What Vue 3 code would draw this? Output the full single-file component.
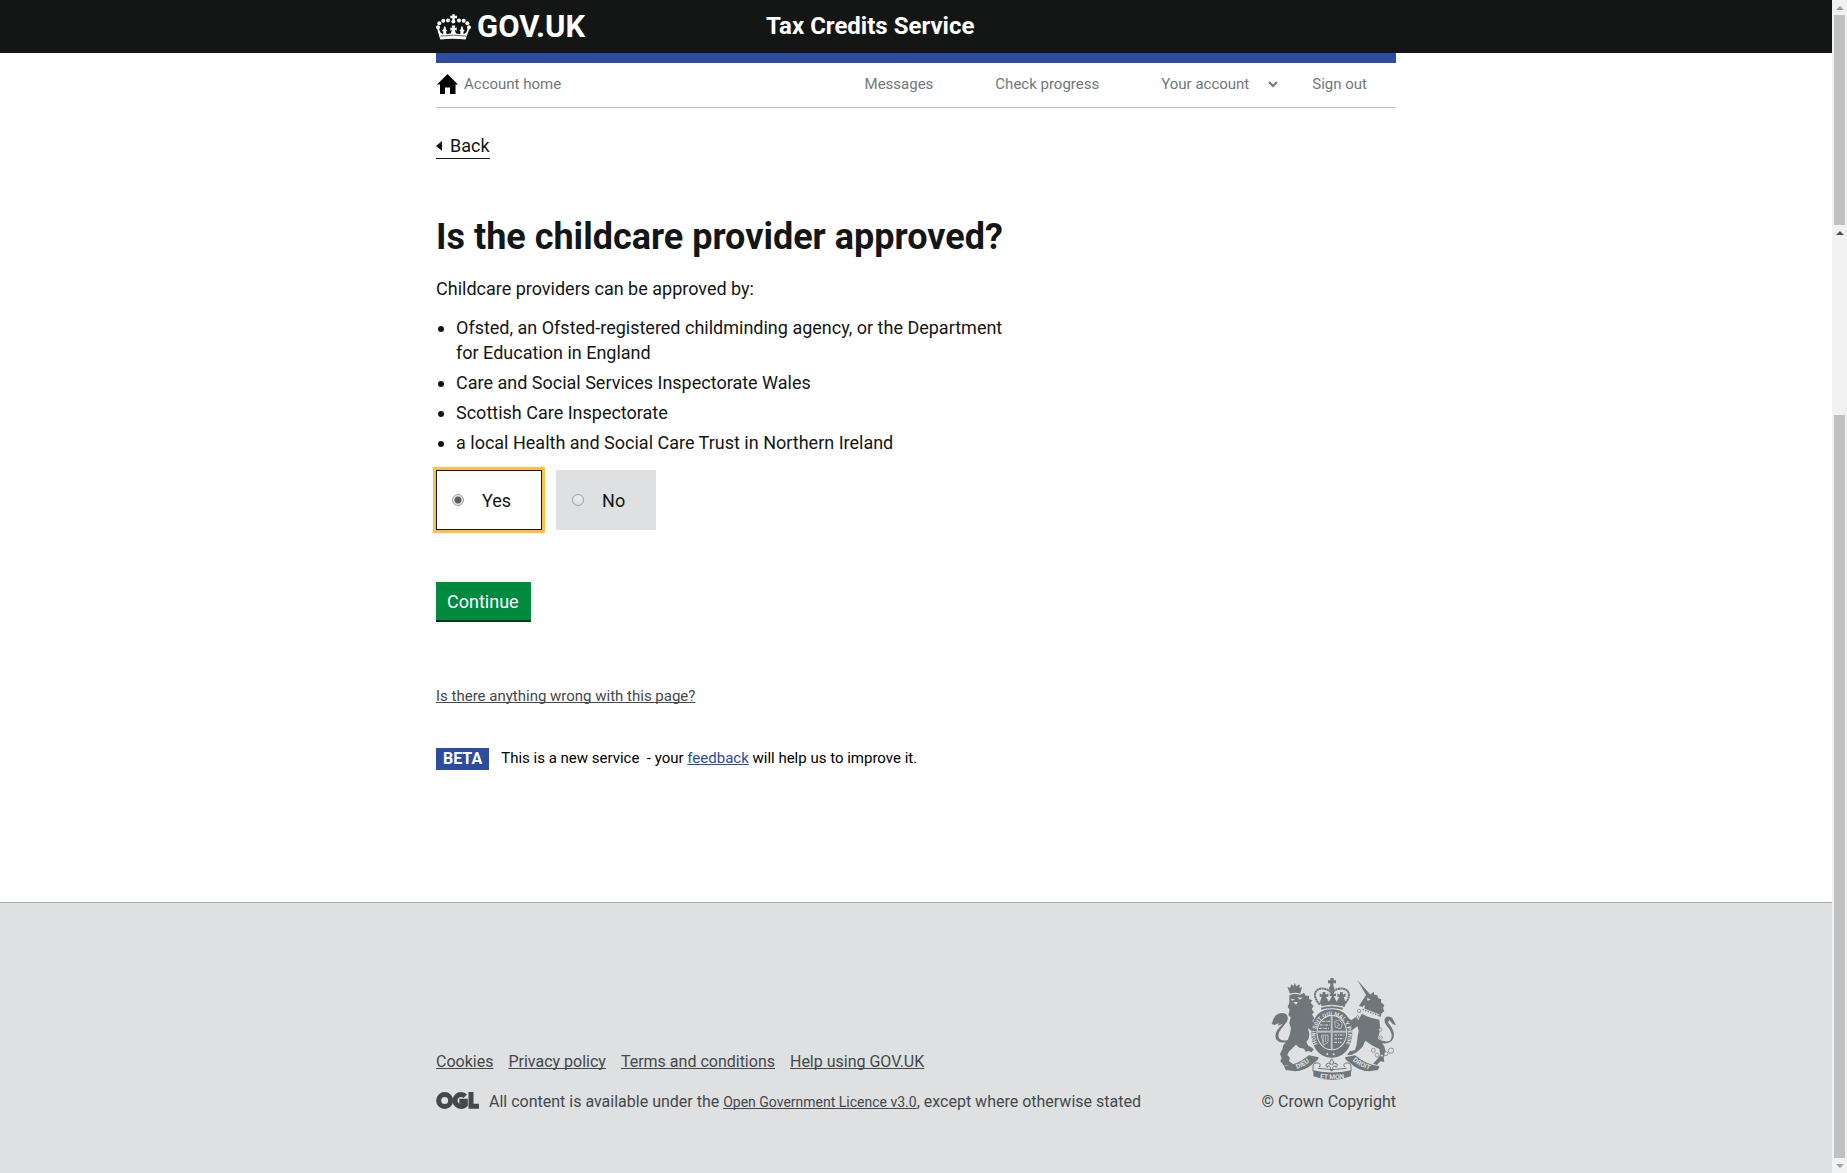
<script setup>
import { ref } from 'vue'

const approved = ref('yes')

const bodies = [
  'Ofsted, an Ofsted-registered childminding agency, or the Department for Education in England',
  'Care and Social Services Inspectorate Wales',
  'Scottish Care Inspectorate',
  'a local Health and Social Care Trust in Northern Ireland',
]

const footerLinks = ['Cookies', 'Privacy policy', 'Terms and conditions', 'Help using GOV.UK']
</script>

<template>
  <div class="window">
    <div class="page">
      <header class="masthead">
        <div class="wrap masthead-row">
          <a href="#" class="logo">
            <svg class="crown" viewBox="33 39 105 77" aria-hidden="true">
              <g fill="#fff">
                <path d="M82 39h7v5h7v7h-7v9h-7v-9h-6v-7h6z" />
                <circle cx="85" cy="61" r="6" />
                <circle cx="69" cy="58" r="6" />
                <circle cx="55" cy="59" r="6" />
                <circle cx="43" cy="66" r="6" />
                <circle cx="39" cy="78" r="6" />
                <circle cx="102" cy="58" r="6" />
                <circle cx="116" cy="59" r="6" />
                <circle cx="127" cy="66" r="6" />
                <circle cx="132" cy="78" r="6" />
                <path d="M36 81l5-1 5 13 8 7 1-8-4-3 4-4 2-9h4l2 9 4 3-4 4 2 7 12-2 4-11-5 3v-11l6 3-2-8h11l-2 8 6-3v11l-6-3 4 11 12 2 2-7-4-4 4-3 2-9h4l2 9 4 4-4 3 1 8 8-7 5-13 5 1-8 22-4 12q-38-5-76 0l-4-12z" />
              </g>
              <path d="M46 105q39-6 78 0" fill="none" stroke="#131615" stroke-width="2" />
            </svg>
            <span>GOV.UK</span>
          </a>
          <a href="#" class="service">Tax Credits Service</a>
        </div>
      </header>

      <div class="wrap">
        <nav class="account-nav" aria-label="Account">
          <a href="#" class="home">
            <svg viewBox="0 0 21 20" width="21" height="20" aria-hidden="true">
              <path d="M10.500 0L21 10.500H18.500V20H13V13.500H8V20H3V10.500H0z" />
            </svg>
            <span>Account home</span>
          </a>
          <a href="#">Messages</a>
          <a href="#">Check progress</a>
          <button type="button" class="menu">
            <span>Your account</span>
            <svg viewBox="0 0 10 7" width="10" height="7" aria-hidden="true">
              <path d="M1 1l4 4 4-4" fill="none" stroke="#6f777b" stroke-width="2" />
            </svg>
          </button>
          <a href="#">Sign out</a>
        </nav>

        <main>
          <a href="#" class="back"><i class="back-arrow"></i>Back</a>
          <form @submit.prevent>
            <h1>Is the childcare provider approved?</h1>
            <p>Childcare providers can be approved by:</p>
            <ul class="bodies">
              <li v-for="body in bodies" :key="body">{{ body }}</li>
            </ul>
            <div class="choices" role="radiogroup">
              <label class="choice" :class="{ selected: approved === 'yes' }">
                <input v-model="approved" type="radio" name="approved" value="yes" />Yes
              </label>
              <label class="choice" :class="{ selected: approved === 'no' }">
                <input v-model="approved" type="radio" name="approved" value="no" />No
              </label>
            </div>
            <button type="submit" class="continue">Continue</button>
          </form>
          <a href="#" class="report">Is there anything wrong with this page?</a>
          <p class="beta">
            <strong>BETA</strong>
            <span>This is a new service&nbsp; - your <a href="#">feedback</a> will help us to improve it.</span>
          </p>
        </main>
      </div>

      <footer>
        <div class="wrap footer-row">
          <div class="footer-meta">
            <ul class="footer-links">
              <li v-for="link in footerLinks" :key="link"><a href="#">{{ link }}</a></li>
            </ul>
            <p class="licence">
              <svg class="ogl" viewBox="0 0 129 51" aria-hidden="true">
                <g fill="none" stroke="#45484a" stroke-width="15">
                  <circle cx="26" cy="25.500" r="18" />
                  <path d="M88 13a18 18 0 1 0 0 25V28H70" />
                  <path d="M105 0v43h24" />
                </g>
              </svg>
              <span>All content is available under the <a href="#">Open Government Licence v3.0</a>, except where otherwise stated</span>
            </p>
          </div>
          <a href="#" class="copyright">
            <svg class="arms" viewBox="93 54 375 306" aria-hidden="true">
              <defs>
                <path id="garter" d="M238 262A49 58 0 1 1 313 262" />
                <path id="dieu" d="M165 329Q190 321 214 302" />
                <path id="droit" d="M334 299Q357 320 393 331" />
                <path id="mon" d="M225 352Q276 364 328 352" />
              </defs>
              <g fill="#6f777b">
                <!-- lion -->
                <path d="M142 80l8 4 4-11 7 6 3-11 5 11 9-6 1 11 7-3-5 20q-16-5-31 0z" />
                <path d="M148 106L162 101 182 104 192 98 197 107 207 107 207 117 217 121 212 129 221 138 215 147 222 157 216 163 223 175 217 184 228 194 226 208 214 212 204 204 208 222 206 236 199 246 205 257 214 262 221 268 215 277 206 273 197 275 192 266 178 263 168 254 160 262 146 276 142 285 150 294 147 303 158 311 161 320 150 318 140 316 132 318 126 310 121 304 125 294 120 282 127 268 130 256 143 240 150 222 153 205 148 190 152 172 145 165 149 150 143 140 148 128z" />
                <path d="M95 192q4-18 13-26q14-11 30-4q10 10 2 24l-16 20q-12 14-8 26 6 14 28 8l2 5q-28 8-38-8-6-14 6-30l14-16-14 6 2-8-12 6z" />
                <!-- unicorn -->
                <path d="M352 60L390 103 380 108z" />
                <path d="M376 108l7-8 9 3 9-8 2 9 9 2 2 8 10 4-1 9 10 9-4 8 4 10-8 6-3 11-50-20 3-17-8 7-10-4 6-9z" />
                <path d="M366 161q22 14 52 18l3 30-7 26 19 24 5 20-7 13 2 14-12-2-10 11-12-4 10-10 12-16-3-18-20-10-22-15-9 20-16 14-16 8-14 2 8-12 16-3 5-18 3-24 3-16-4-14-14 10-13 4-4-7 14-9-10-11-16-3 1-9 12-2 12 9 12-9 9 8z" />
                <path d="M412 238q46 18 43-14-4-16-16-28-10-14-2-24 10-6 20 2l11 22-10-4-10-12-4 8q14 14 18 34 0 36-46 26z" />
                <!-- royal crown -->
                <path d="M271 54h10v7h7v9h-8v8h-9v-8h-7v-9h7z" />
                <circle cx="275" cy="85" r="8" />
                <path d="M239 128l6-17-6-1v-10l8 4 1-8h8l1 8 8-4v10l-7 1 9 14 9-17-7 1v-9l6 3-2-9h10l-2 9 7-3v9l-7-1 9 17 8-14-6-1v-10l7 4 2-8h7l1 8 8-4v10l-6 1 6 17-3 13q-34-8-67 0z" />
              </g>
              <path d="M153 116l11 2-8 5zM173 112l15 1-9 6zM160 126l14 0-6 8z" fill="#dee0e2" />
              <path d="M367 148l50 20" stroke="#dee0e2" stroke-width="9" />
              <path d="M368 148l48 19" stroke="#6f777b" stroke-width="4" stroke-dasharray="4 4" />
              <path d="M380 114l12 4-9 4z" fill="#dee0e2" />
              <path d="M242 140q33-9 67 0" fill="none" stroke="#dee0e2" stroke-width="3" />
              <path d="M243 146q32-9 65 0" fill="none" stroke="#6f777b" stroke-width="6" />
              <path d="M240 134C211 105 228 79 257 87Q267 90 275 99Q283 90 293 87C323 79 342 105 311 134" fill="none" stroke="#6f777b" stroke-width="6" stroke-dasharray="7 1" />
              <!-- garter and shield -->
              <path d="M275 148C317 148 337 180 337 219C337 260 313 293 275 293C237 293 214 260 214 219C214 180 233 148 275 148z" fill="#6f777b" />
              <ellipse cx="275.500" cy="218" rx="46" ry="53" fill="#dee0e2" />
              <ellipse cx="275.500" cy="218" rx="43" ry="50" fill="#6f777b" />
              <path d="M275 168v99M233 215h85" fill="none" stroke="#dee0e2" stroke-width="5" />
              <path d="M275 168v99M233 215h85" fill="none" stroke="#6f777b" stroke-width="1" />
              <path d="M246 184h24M240 195h29M237 205h31M283 225h30M283 236h28M283 247h22" fill="none" stroke="#dee0e2" stroke-width="3" stroke-dasharray="8 3 3 2" />
              <path d="M284 184l15-4 8 12-5 14-16-4zM290 188l9 6-8 5M244 226l20-1v22l-14 8zM250 227v22M257 227v19" fill="none" stroke="#dee0e2" stroke-width="2" />
              <circle cx="262" cy="282" r="3" fill="#dee0e2" />
              <circle cx="281" cy="283" r="3" fill="#dee0e2" />
              <text class="motto"><textPath href="#garter" startOffset="50%">HONI SOIT QUI MAL Y PENSE</textPath></text>
              <!-- scrolls -->
              <g fill="#6f777b">
                <path d="M132 319Q172 315 207 286L236 292Q237 299 221 310Q193 334 165 334L137 330z" />
                <path d="M419 319Q380 315 345 286L315 292Q315 299 331 310Q358 334 387 334L414 330z" />
                <path d="M220 331Q276 344 333 331V349Q276 371 220 349z" />
              </g>
              <path d="M219 334V320Q219 307 235 309Q244 312 238 322M333 334V320Q333 307 317 309Q308 312 314 322M234 325Q276 333 319 325" fill="none" stroke="#6f777b" stroke-width="3" />
              <path d="M275 296l6 10-4 8q7-8 14-2 3 6-3 10 0-7-7-3l-3 4v9h-6v-9l-3-4q-7-4-7 3-6-4-3-10 7-6 14 2l-4-8z" fill="none" stroke="#6f777b" stroke-width="3" />
              <g class="scroll-text">
                <text><textPath href="#dieu" startOffset="50%">DIEU</textPath></text>
                <text><textPath href="#mon" startOffset="50%">ET MON</textPath></text>
                <text><textPath href="#droit" startOffset="50%">DROIT</textPath></text>
              </g>
              <!-- chain -->
              <g fill="#dee0e2" stroke="#6f777b" stroke-width="2">
                <circle cx="357" cy="153" r="5" />
                <circle cx="353" cy="171" r="4" />
                <circle cx="421" cy="209" r="5" />
                <circle cx="422" cy="233" r="5" />
                <circle cx="400" cy="271" r="6" />
                <circle cx="411" cy="285" r="6" />
                <circle cx="426" cy="287" r="4" />
                <circle cx="438" cy="281" r="6" />
                <circle cx="453" cy="272" r="8" />
              </g>
            </svg>
            <span>© Crown Copyright</span>
          </a>
        </div>
      </footer>
    </div>

    <div class="scrollbar" aria-hidden="true">
      <i class="arrow up faint"></i>
      <i class="thumb outer"></i>
      <i class="arrow up"></i>
      <i class="track"></i>
      <i class="thumb inner"></i>
      <i class="arrow down faint"></i>
    </div>
  </div>
</template>

<style>
body {
  margin: 0;
}
</style>

<style scoped>
.window {
  display: flex;
  min-height: 100vh;
  font-family: Roboto, "Liberation Sans", sans-serif;
  color: #131615;
  background: #fff;
}

.page {
  flex: 1;
  display: flex;
  flex-direction: column;
}

.wrap {
  box-sizing: border-box;
  width: 100%;
  max-width: 960px;
  margin: 0 auto;
}

a {
  color: inherit;
  text-decoration-skip-ink: none;
}

.masthead {
  background: #131615;
  color: #fff;
  font-weight: 700;
}

.masthead-row {
  display: flex;
  align-items: center;
  height: 53px;
}

.masthead a {
  text-decoration: none;
}

.logo {
  display: flex;
  align-items: center;
  gap: 6px;
  width: 330px;
  font-size: 31px;
}

.crown {
  width: 35px;
  height: 26px;
}

.service {
  padding-bottom: 2px;
  font-size: 24px;
}

.account-nav {
  display: flex;
  align-items: center;
  gap: 62px;
  height: 42px;
  padding: 0 29px 2px 0;
  border-top: 10px solid #2b4c9f;
  border-bottom: 1px solid #bfc1c3;
  font-size: 15px;
  color: #6f777b;
}

.account-nav a {
  text-decoration: none;
}

.home {
  display: flex;
  align-items: center;
  gap: 6px;
  margin-right: auto;
  padding-left: 1px;
}

.home svg {
  fill: #000;
}

.menu {
  display: flex;
  align-items: center;
  gap: 19px;
  margin-right: -28px;
  padding: 0;
  border: 0;
  background: none;
  font: inherit;
  color: inherit;
}

main {
  display: flex;
  flex-direction: column;
  align-items: flex-start;
  padding: 25px 0 131px;
  font-size: 18px;
  line-height: 25px;
}

.back {
  display: flex;
  align-items: center;
  gap: 8px;
  border-bottom: 1px solid #131615;
  text-decoration: none;
}

.back-arrow {
  border: 5px solid transparent;
  border-right: 6px solid #131615;
  border-left: 0;
}

form {
  max-width: 590px;
}

h1 {
  margin: 58px 0 19px;
  font-size: 36px;
  line-height: 40px;
}

p {
  margin: 0;
}

.bodies {
  margin: 14px 0 15px;
  padding-left: 20px;
}

.bodies li {
  margin-bottom: 5px;
}

.choices {
  display: flex;
  gap: 14px;
}

.choice {
  box-sizing: border-box;
  display: flex;
  align-items: center;
  gap: 18px;
  height: 60px;
  padding: 0 30px 0 15px;
  border: 1px solid #dee0e2;
  background: #dee0e2;
}

.choice.selected {
  border-color: #131615;
  background: #fff;
  outline: 3px solid #ffbf47;
}

.choice input {
  appearance: none;
  width: 12px;
  height: 12px;
  margin: 0;
  border: 1px solid #a0a0a0;
  border-radius: 50%;
  background: linear-gradient(#ededed, #dedede);
}

.choice input:checked {
  background: radial-gradient(circle, #5c5c5c 3px, #e6e6e6 4px);
}

.continue {
  margin-top: 52px;
  padding: 7px 12px 6px 11px;
  border: 0;
  box-shadow: 0 2px 0 #003618;
  background: #008a40;
  color: #fff;
  font: inherit;
}

.report {
  margin-top: 64px;
  font-size: 15px;
  color: #45484a;
}

.beta {
  display: flex;
  align-items: center;
  gap: 12px;
  margin-top: 37px;
  font-size: 15px;
  color: #000;
}

.beta strong {
  padding: 0 7px;
  line-height: 22px;
  font-size: 16px;
  background: #2b4c9f;
  color: #fff;
}

.beta a {
  color: #2b4c9f;
}

footer {
  flex: 1;
  border-top: 1px solid #a1acb2;
  background: #dee0e2;
  color: #45484a;
  font-size: 16px;
  line-height: 20px;
}

.footer-row {
  display: flex;
  justify-content: space-between;
  align-items: flex-end;
  padding: 75px 0 60px;
}

.footer-links {
  display: flex;
  gap: 15px;
  margin: 0 0 20px;
  padding: 0;
  list-style: none;
}

.licence {
  display: flex;
  gap: 10px;
}

.licence a {
  font-size: 14px;
}

.ogl {
  width: 43px;
  height: 17px;
}

.copyright {
  display: flex;
  flex-direction: column;
  align-items: flex-end;
  gap: 12px;
  text-decoration: none;
}

.arms {
  width: 125px;
  height: 102px;
}

.arms text {
  fill: #dee0e2;
  font-weight: 700;
  font-size: 17px;
  text-anchor: middle;
}

.arms .scroll-text text {
  font-size: 20px;
}

.scrollbar {
  display: flex;
  flex-direction: column;
  align-items: center;
  width: 15px;
  background: #f1f1f1;
}

.thumb {
  width: 11px;
  background: #c1c1c1;
}

.outer {
  flex: 210;
}

.track {
  flex: 175;
}

.inner {
  flex: 742;
}

.arrow {
  display: flex;
  align-items: center;
  justify-content: center;
  height: 15px;
}

.arrow::before {
  content: "";
  border: 4px solid transparent;
}

.up::before {
  border-top: 0;
  border-bottom-color: #505050;
}

.down::before {
  border-bottom: 0;
  border-top-color: #505050;
}

.faint {
  opacity: 0.5;
}
</style>
